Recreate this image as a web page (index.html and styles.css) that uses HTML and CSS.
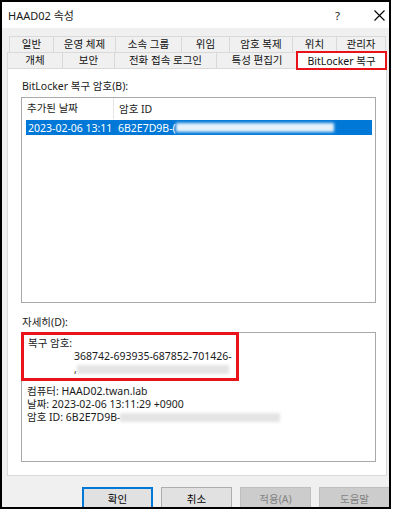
FILE: index.html
```html
<!DOCTYPE html>
<html lang="ko">
<head>
    <meta charset="UTF-8">
    <meta name="viewport" content="width=device-width, initial-scale=1.0">
    <title>HAAD02 속성</title>
    <link rel="stylesheet" href="styles.css">
</head>
<body>

<div class="window">
    <div class="titlebar">
        <span class="title">HAAD02 속성</span>
        <span class="help">?</span>
        <span class="close">
            <svg width="11" height="11" viewBox="0 0 11 11">
                <path d="M0.5 0.5 L10.5 10.5 M10.5 0.5 L0.5 10.5" stroke="#000" stroke-width="1.1" fill="none"/>
            </svg>
        </span>
    </div>

    <div class="body">
        <div class="tab-row row-top">
            <div class="tab w44">일반</div>
            <div class="tab w62">운영 체제</div>
            <div class="tab w66">소속 그룹</div>
            <div class="tab w48">위임</div>
            <div class="tab w63">암호 복제</div>
            <div class="tab w44">위치</div>
            <div class="tab w49">관리자</div>
        </div>
        <div class="tab-row row-bottom">
            <div class="tab w55">개체</div>
            <div class="tab w52">보안</div>
            <div class="tab w102">전화 접속 로그인</div>
            <div class="tab w81">특성 편집기</div>
            <div class="tab tab-active">BitLocker 복구</div>
        </div>

        <div class="panel">
            <div class="label">BitLocker 복구 암호(B):</div>
            <div class="list">
                <div class="list-header">
                    <div class="col col-date">추가된 날짜</div>
                    <div class="col col-id">암호 ID</div>
                </div>
                <div class="list-row selected">
                    <div class="col col-date">2023-02-06 13:11</div>
                    <div class="col col-id">6B2E7D9B-(<span class="blur blur-light"></span></div>
                </div>
            </div>

            <div class="label label-details">자세히(D):</div>
            <div class="details">
                <div class="mark">
                    <div class="line">복구 암호:</div>
                    <div class="line indent">368742-693935-687852-701426-</div>
                    <div class="line indent">,<span class="blur blur-gray w150"></span></div>
                </div>
                <div class="info">
                    <div class="line">컴퓨터: HAAD02.twan.lab</div>
                    <div class="line">날짜: 2023-02-06 13:11:29 +0900</div>
                    <div class="line">암호 ID: 6B2E7D9B-<span class="blur blur-gray w160"></span></div>
                </div>
            </div>
        </div>

        <div class="buttons">
            <button class="btn btn-default">확인</button>
            <button class="btn">취소</button>
            <button class="btn" disabled>적용(A)</button>
            <button class="btn" disabled>도움말</button>
        </div>
    </div>
</div>

</body>
</html>
```

FILE: styles.css
```css
body {
    margin: 0;
    padding: 0;
    background-color: #fff;
    font-family: "Noto Sans", "Noto Sans CJK KR", sans-serif;
    font-size: 10.5px;
    color: #1a1a1a;
}

.window {
    width: 387px;
    height: 505px;
    border: 2px solid #000;
    background-color: #f0f0f0;
    overflow: hidden;
    display: flex;
    flex-direction: column;
}

.titlebar {
    height: 26px;
    flex-shrink: 0;
    background-color: #fff;
    display: flex;
    align-items: center;
    padding-left: 6px;
    font-size: 11px;
}

.title {
    flex: 1;
}

.help {
    width: 12px;
    margin-right: 27px;
    font-size: 11.5px;
}

.close {
    display: flex;
    margin-right: 4px;
}

.body {
    padding: 8px 0 0 5px;
    display: flex;
    flex-direction: column;
}

.tab-row {
    display: flex;
    height: 16px;
}

.row-top {
    margin-left: 3px;
}

.row-bottom {
    margin-left: 1px;
}

.tab {
    box-sizing: border-box;
    height: 16px;
    border: 1px solid #d9d9d9;
    border-bottom: none;
    margin-left: -1px;
    display: flex;
    align-items: center;
    justify-content: center;
    line-height: 1;
    color: #111;
}

.w44 { width: 45px; }
.w48 { width: 49px; }
.w49 { width: 50px; }
.w55 { width: 56px; }
.w52 { width: 53px; }
.w62 { width: 63px; }
.w63 { width: 64px; }
.w66 { width: 67px; }
.w81 { width: 82px; }
.w102 { width: 103px; }

.tab-active {
    width: 89px;
    height: 17px;
    background-color: #fff;
    position: relative;
    z-index: 1;
    outline: 2px solid #e8141a;
    outline-offset: -1px;
}

.panel {
    box-sizing: border-box;
    height: 408px;
    margin-right: 2px;
    background-color: #fff;
    border: 1px solid #d9d9d9;
    padding: 10px 10px 0 13px;
}

.label {
    line-height: 14px;
    height: 14px;
    margin-bottom: 4px;
    padding-left: 1px;
}

.label-details {
    margin-top: 12px;
    margin-bottom: 3px;
}

.list {
    box-sizing: border-box;
    width: 355px;
    height: 206px;
    border: 1px solid #a9a9a9;
}

.list-header {
    display: flex;
    height: 21px;
    align-items: center;
    color: #222;
}

.list-header .col-date {
    width: 86px;
    padding-left: 5px;
    border-right: 1px solid #e5e5e5;
    height: 21px;
    line-height: 21px;
}

.col-id {
    padding-left: 5px;
}

.list-row {
    display: flex;
    align-items: center;
    height: 15px;
    margin: 1px 3px 0 4px;
}

.list-row .col-date {
    width: 85px;
    padding-left: 2px;
}

.list-row .col-id {
    display: flex;
    align-items: center;
}

.selected {
    background-color: #0078d7;
    color: #fff;
}

.blur {
    display: inline-block;
    height: 9px;
    filter: blur(1.5px);
}

.blur-light {
    width: 158px;
    background-color: rgba(255, 255, 255, 0.9);
}

.blur-gray {
    background-color: #e4e4e4;
}

.w150 { width: 152px; }
.w160 { width: 160px; }

.details {
    box-sizing: border-box;
    width: 355px;
    height: 130px;
    border: 1px solid #a9a9a9;
}

.mark {
    box-sizing: border-box;
    width: 218px;
    height: 49px;
    margin: -1px 0 0 -1px;
    border: 3px solid #e8141a;
    padding: 2px 0 0 4px;
}

.line {
    line-height: 13px;
    height: 13px;
    white-space: nowrap;
    display: flex;
    align-items: center;
}

.indent {
    padding-left: 46px;
}

.info {
    margin-top: 4px;
    padding-left: 5px;
}

.buttons {
    display: flex;
    padding: 11px 0 0 75px;
}

.btn {
    box-sizing: border-box;
    flex-shrink: 0;
    width: 71px;
    height: 23px;
    margin-right: 8px;
    background-color: #e1e1e1;
    border: 1px solid #adadad;
    font-family: "Noto Sans", "Noto Sans CJK KR", sans-serif;
    font-size: 10.5px;
    color: #000;
    padding: 0;
}

.btn-default {
    border: 1px solid #0078d7;
    box-shadow: inset 0 0 0 1px #0078d7;
}

.btn:disabled {
    background-color: #cccccc;
    border-color: #bfbfbf;
    color: #838383;
}
```
